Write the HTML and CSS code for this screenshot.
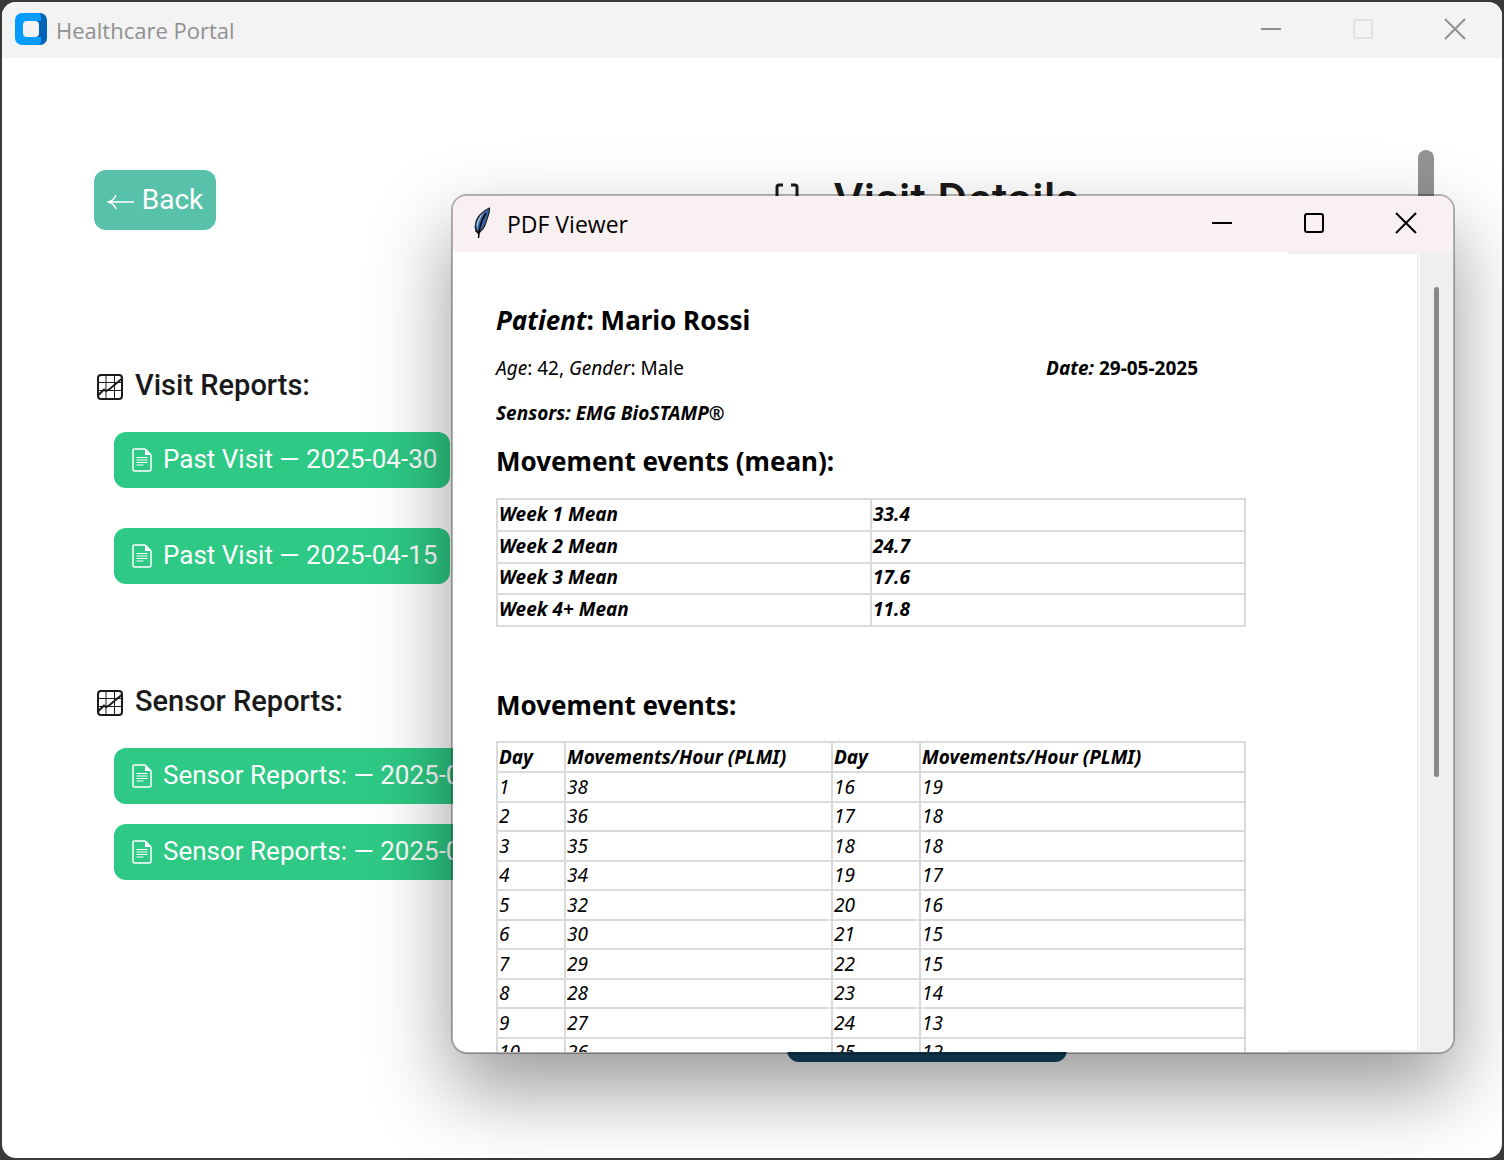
FILE: index.html
```html
<!DOCTYPE html>
<html lang="en">
<head>
<meta charset="utf-8">
<title>Healthcare Portal</title>
<link rel="stylesheet" href="styles.css">
</head>
<body>
<svg class="sprite" aria-hidden="true">
  <symbol id="doc" viewBox="0 0 20 24">
    <path d="M2 1h11l6 6v14.500a1.500 1.500 0 0 1-1.500 1.500h-15A1.500 1.500 0 0 1 1 21.500V2a1 1 0 0 1 1-1z" fill="none" stroke="currentColor" stroke-width="1.500"/>
    <path d="M13 1v6h6z" fill="currentColor"/>
    <path d="M4.500 9.500h11M4.500 12h11M4.500 14.500h11M4.500 17h7" stroke="currentColor" stroke-width="1"/>
  </symbol>
  <symbol id="chart" viewBox="0 0 26 26">
    <path d="M9 1v24M17.500 1v24M1 8.500h24M1 16.500h24" stroke="currentColor" stroke-width="1"/>
    <rect x="1" y="1" width="24" height="24" rx="3" fill="none" stroke="currentColor" stroke-width="2"/>
    <path d="M1.500 21l5.500-5.500 2 1.500 2.500-1L24.500 5" fill="none" stroke="currentColor" stroke-width="2"/>
  </symbol>
  <symbol id="cross" viewBox="0 0 22 22">
    <path d="M1 1l20 20M21 1L1 21" stroke="currentColor" stroke-width="2"/>
  </symbol>
  <symbol id="box" viewBox="0 0 22 22">
    <rect x="2" y="2" width="18" height="18" rx="2" fill="none" stroke="currentColor" stroke-width="2"/>
  </symbol>
  <symbol id="dash" viewBox="0 0 22 22">
    <path d="M1 11h20" stroke="currentColor" stroke-width="2"/>
  </symbol>
</svg>

<div class="window">
  <header class="titlebar">
    <svg class="logo" viewBox="0 0 32 32" aria-hidden="true">
      <rect x="10" width="22" height="32" rx="7" fill="#0063b8"/>
      <path d="M7 0h15a4 4 0 0 1 4 4v24a4 4 0 0 1-4 4H7a7 7 0 0 1-7-7V7a7 7 0 0 1 7-7z" fill="#029cff"/>
      <path d="M22 8h4.500v16H22z" fill="#0063b8"/>
      <rect x="8" y="8" width="16" height="16" rx="4" fill="#f3f3f3"/>
    </svg>
    <span class="caption">Healthcare Portal</span>
    <div class="controls">
      <button type="button" aria-label="Minimize"><svg><use href="#dash"/></svg></button>
      <button type="button" aria-label="Maximize" disabled><svg><use href="#box"/></svg></button>
      <button type="button" aria-label="Close"><svg><use href="#cross"/></svg></button>
    </div>
  </header>

  <main class="content">
    <aside class="side">
      <button type="button" class="back"><svg viewBox="0 0 28 16" aria-hidden="true"><path d="M27 8H2M9 1C7.500 5 5 7 1.500 8 5 9 7.500 11 9 15" fill="none" stroke="currentColor" stroke-width="1.600"/></svg>Back</button>
      <section class="reports reports-visit">
        <h2><svg aria-hidden="true"><use href="#chart"/></svg>Visit Reports:</h2>
        <button type="button" class="report"><svg aria-hidden="true"><use href="#doc"/></svg>Past Visit — 2025-04-30</button>
        <button type="button" class="report"><svg aria-hidden="true"><use href="#doc"/></svg>Past Visit — 2025-04-15</button>
      </section>
      <section class="reports reports-sensor">
        <h2><svg aria-hidden="true"><use href="#chart"/></svg>Sensor Reports:</h2>
        <button type="button" class="report"><svg aria-hidden="true"><use href="#doc"/></svg>Sensor Reports: — 2025-0</button>
        <button type="button" class="report"><svg aria-hidden="true"><use href="#doc"/></svg>Sensor Reports: — 2025-0</button>
      </section>
    </aside>
    <div class="details">
      <h1><svg viewBox="0 0 24 34" aria-hidden="true"><path d="M8 2H4a2 2 0 0 0-2 2v26a2 2 0 0 0 2 2h16a2 2 0 0 0 2-2V4a2 2 0 0 0-2-2h-4" fill="none" stroke="currentColor" stroke-width="3"/></svg>Visit Details</h1>
      <button type="button" class="primary" aria-label="Confirm"></button>
    </div>
    <div class="scroll"></div>
  </main>
</div>

<div class="viewer">
  <header class="titlebar viewer-bar">
    <svg class="feather" viewBox="0 0 20 32" aria-hidden="true">
      <path d="M17.500 1C10 4 4 11 3.500 18c-1 2 0 4 1 6l2 1c4-1 7-7 8.500-13 1.500-4 3-8 2.500-11z" fill="#3465a8" stroke="#222" stroke-width="1.200"/>
      <path d="M13 5C8 8 5 13 4.500 18l1 4C6 15 9 9 13 5z" fill="#a9bdd4"/>
      <path d="M14 6C10 12 7 19 6.500 31" fill="none" stroke="#000" stroke-width="1.500"/>
      <path d="M3.500 23.500l3 3 2-2.500" fill="none" stroke="#000" stroke-width="1.500"/>
    </svg>
    <span class="caption">PDF Viewer</span>
    <div class="controls">
      <button type="button" aria-label="Minimize"><svg><use href="#dash"/></svg></button>
      <button type="button" aria-label="Maximize"><svg><use href="#box"/></svg></button>
      <button type="button" aria-label="Close"><svg><use href="#cross"/></svg></button>
    </div>
  </header>
  <div class="viewer-body">
    <article class="page">
      <h2><em>Patient</em>: Mario Rossi</h2>
      <div class="meta">
        <p><em>Age</em>: 42, <em>Gender</em>: Male</p>
        <p class="strong"><em>Date:</em> 29-05-2025</p>
      </div>
      <p class="strong sensors"><em>Sensors: EMG BioSTAMP®</em></p>
      <h2>Movement events (mean):</h2>
      <table class="means">
        <tr><th scope="row">Week 1 Mean</th><td>33.4</td></tr>
        <tr><th scope="row">Week 2 Mean</th><td>24.7</td></tr>
        <tr><th scope="row">Week 3 Mean</th><td>17.6</td></tr>
        <tr><th scope="row">Week 4+ Mean</th><td>11.8</td></tr>
      </table>
      <h2>Movement events:</h2>
      <table class="events">
        <colgroup><col class="c-day"><col class="c-rate"><col class="c-day2"><col></colgroup>
        <thead><tr><th>Day</th><th>Movements/Hour (PLMI)</th><th>Day</th><th>Movements/Hour (PLMI)</th></tr></thead>
        <tbody>
          <tr><td>1</td><td>38</td><td>16</td><td>19</td></tr>
          <tr><td>2</td><td>36</td><td>17</td><td>18</td></tr>
          <tr><td>3</td><td>35</td><td>18</td><td>18</td></tr>
          <tr><td>4</td><td>34</td><td>19</td><td>17</td></tr>
          <tr><td>5</td><td>32</td><td>20</td><td>16</td></tr>
          <tr><td>6</td><td>30</td><td>21</td><td>15</td></tr>
          <tr><td>7</td><td>29</td><td>22</td><td>15</td></tr>
          <tr><td>8</td><td>28</td><td>23</td><td>14</td></tr>
          <tr><td>9</td><td>27</td><td>24</td><td>13</td></tr>
          <tr><td>10</td><td>26</td><td>25</td><td>12</td></tr>
        </tbody>
      </table>
    </article>
    <div class="margin"></div>
    <div class="viewer-scroll"><div class="thumb"></div></div>
  </div>
</div>
</body>
</html>
```
FILE: styles.css
```css
* { box-sizing: border-box; }
html, body { height: 100%; }
body {
  margin: 0;
  padding: 2px;
  background: #39393a;
  font-family: Roboto, sans-serif;
  position: relative;
  overflow: hidden;
}
h1, h2, p { margin: 0; }
button { font: inherit; border: 0; padding: 0; }
.sprite { display: none; }

.window {
  height: 100%;
  display: flex;
  flex-direction: column;
  background: #fff;
  border-radius: 14px;
  overflow: hidden;
}
.titlebar {
  height: 56px;
  flex: none;
  display: flex;
  align-items: center;
  background: #f3f3f3;
  color: #909090;
  padding: 0 1px 2px 13px;
}
.caption {
  font-family: "Open Sans", sans-serif;
  font-size: 22px;
  line-height: 32px;
  padding-top: 2px;
}
.logo { width: 32px; height: 32px; margin-right: 9px; }
.controls { margin-left: auto; display: flex; }
.controls button {
  width: 92px;
  height: 54px;
  display: grid;
  place-items: center;
  background: none;
  color: inherit;
}
.controls button:disabled { color: #e0e0e0; }
.controls svg { width: 22px; height: 22px; }

.content {
  flex: 1;
  display: grid;
  grid-template-columns: 342px 1fr 16px;
  padding: 92px 68px 0 92px;
}
.side { padding-top: 20px; }
.back {
  width: 122px;
  height: 60px;
  padding-bottom: 2px;
  border-radius: 12px;
  background: #58c1a9;
  color: #fff;
  font-size: 28px;
  display: flex;
  align-items: center;
  justify-content: center;
  gap: 7px;
}
.back svg { width: 28px; height: 16px; margin-top: 6px; }
.reports {
  display: flex;
  flex-direction: column;
  align-items: flex-start;
  padding-left: 20px;
  gap: 20px;
}
.reports-visit { margin-top: 135px; gap: 40px; }
.reports-sensor { margin-top: 97px; }
.reports h2 {
  display: flex;
  align-items: center;
  gap: 12px;
  height: 40px;
  margin-left: -17px;
  color: #1a1a1a;
  font-size: 29px;
  line-height: 40px;
  font-weight: 500;
}
.reports-visit h2 { margin-bottom: -13px; }
.reports-sensor h2 { margin-bottom: 7px; }
.reports h2 svg { width: 26px; height: 26px; margin-top: 4px; }
.report {
  min-width: 336px;
  height: 56px;
  display: flex;
  align-items: center;
  gap: 11px;
  padding: 0 12px 2px 18px;
  border-radius: 12px;
  background: #2ec984;
  color: #fff;
  font-size: 26px;
  white-space: nowrap;
}
.reports-sensor .report { min-width: 400px; }
.report svg { width: 20px; height: 24px; margin-top: 2px; }
.details {
  display: flex;
  flex-direction: column;
  justify-content: space-between;
  align-items: center;
  padding: 20px 0 96px;
}
.details h1 {
  display: flex;
  align-items: center;
  gap: 35px;
  color: #1a1a1a;
  font-size: 46px;
  line-height: 60px;
  font-weight: 500;
}
.details h1 svg { width: 24px; height: 34px; }
.primary {
  width: 280px;
  height: 60px;
  border-radius: 12px;
  background: #144a68;
}
.scroll { border-radius: 8px; background: #939393; height: 800px; }

.viewer {
  position: absolute;
  inset: 194px 49px 106px 451px;
  display: flex;
  flex-direction: column;
  background: #fff;
  background-clip: padding-box;
  border: 2px solid rgba(0, 0, 0, 0.3);
  border-radius: 16px;
  overflow: hidden;
  box-shadow: 0 36px 80px rgba(0, 0, 0, 0.4);
}
.viewer-bar { background: #f9f0f1; color: #000; padding-left: 19px; }
.viewer-bar .caption { font-size: 23px; }
.feather { width: 20px; height: 32px; margin-right: 15px; }
.viewer-body {
  flex: 1;
  min-height: 0;
  display: flex;
  overflow: hidden;
}
.page {
  flex: 0 1 834px;
  padding: 50px 41px 0 43px;
  font-family: "Noto Sans", sans-serif;
  font-size: 19px;
  line-height: 24px;
  color: #000;
}
.page h2 { font-size: 26px; line-height: 36px; font-weight: 700; }
.strong { font-weight: 700; }
.meta {
  display: flex;
  justify-content: space-between;
  padding-right: 48px;
  margin: 18px 0 21px;
}
.sensors { margin-bottom: 18px; }
.page table {
  width: 100%;
  table-layout: fixed;
  border-collapse: collapse;
  margin-top: 19px;
  font-style: italic;
}
.page th, .page td {
  border: 2px solid #dadada;
  padding: 0 1px;
  text-align: left;
  font-weight: 400;
}
.page th, .means td { font-weight: 700; }
.page .means { height: 129px; margin-bottom: 60px; }
.means th, .means td { padding-bottom: 2px; }
.page .events { height: 327px; margin-top: 18px; }
.events th { height: 30px; }
.c-day { width: 68px; }
.c-rate { width: 267px; }
.c-day2 { width: 88px; }
.margin { flex: 1; border: 2px solid #efefef; border-left: 0; }
.viewer-scroll {
  width: 33px;
  margin-left: 1px;
  background: #efefef;
  padding: 35px 14px 0;
}
.thumb { width: 5px; height: 64%; border-radius: 3px; background: #888; }
```
